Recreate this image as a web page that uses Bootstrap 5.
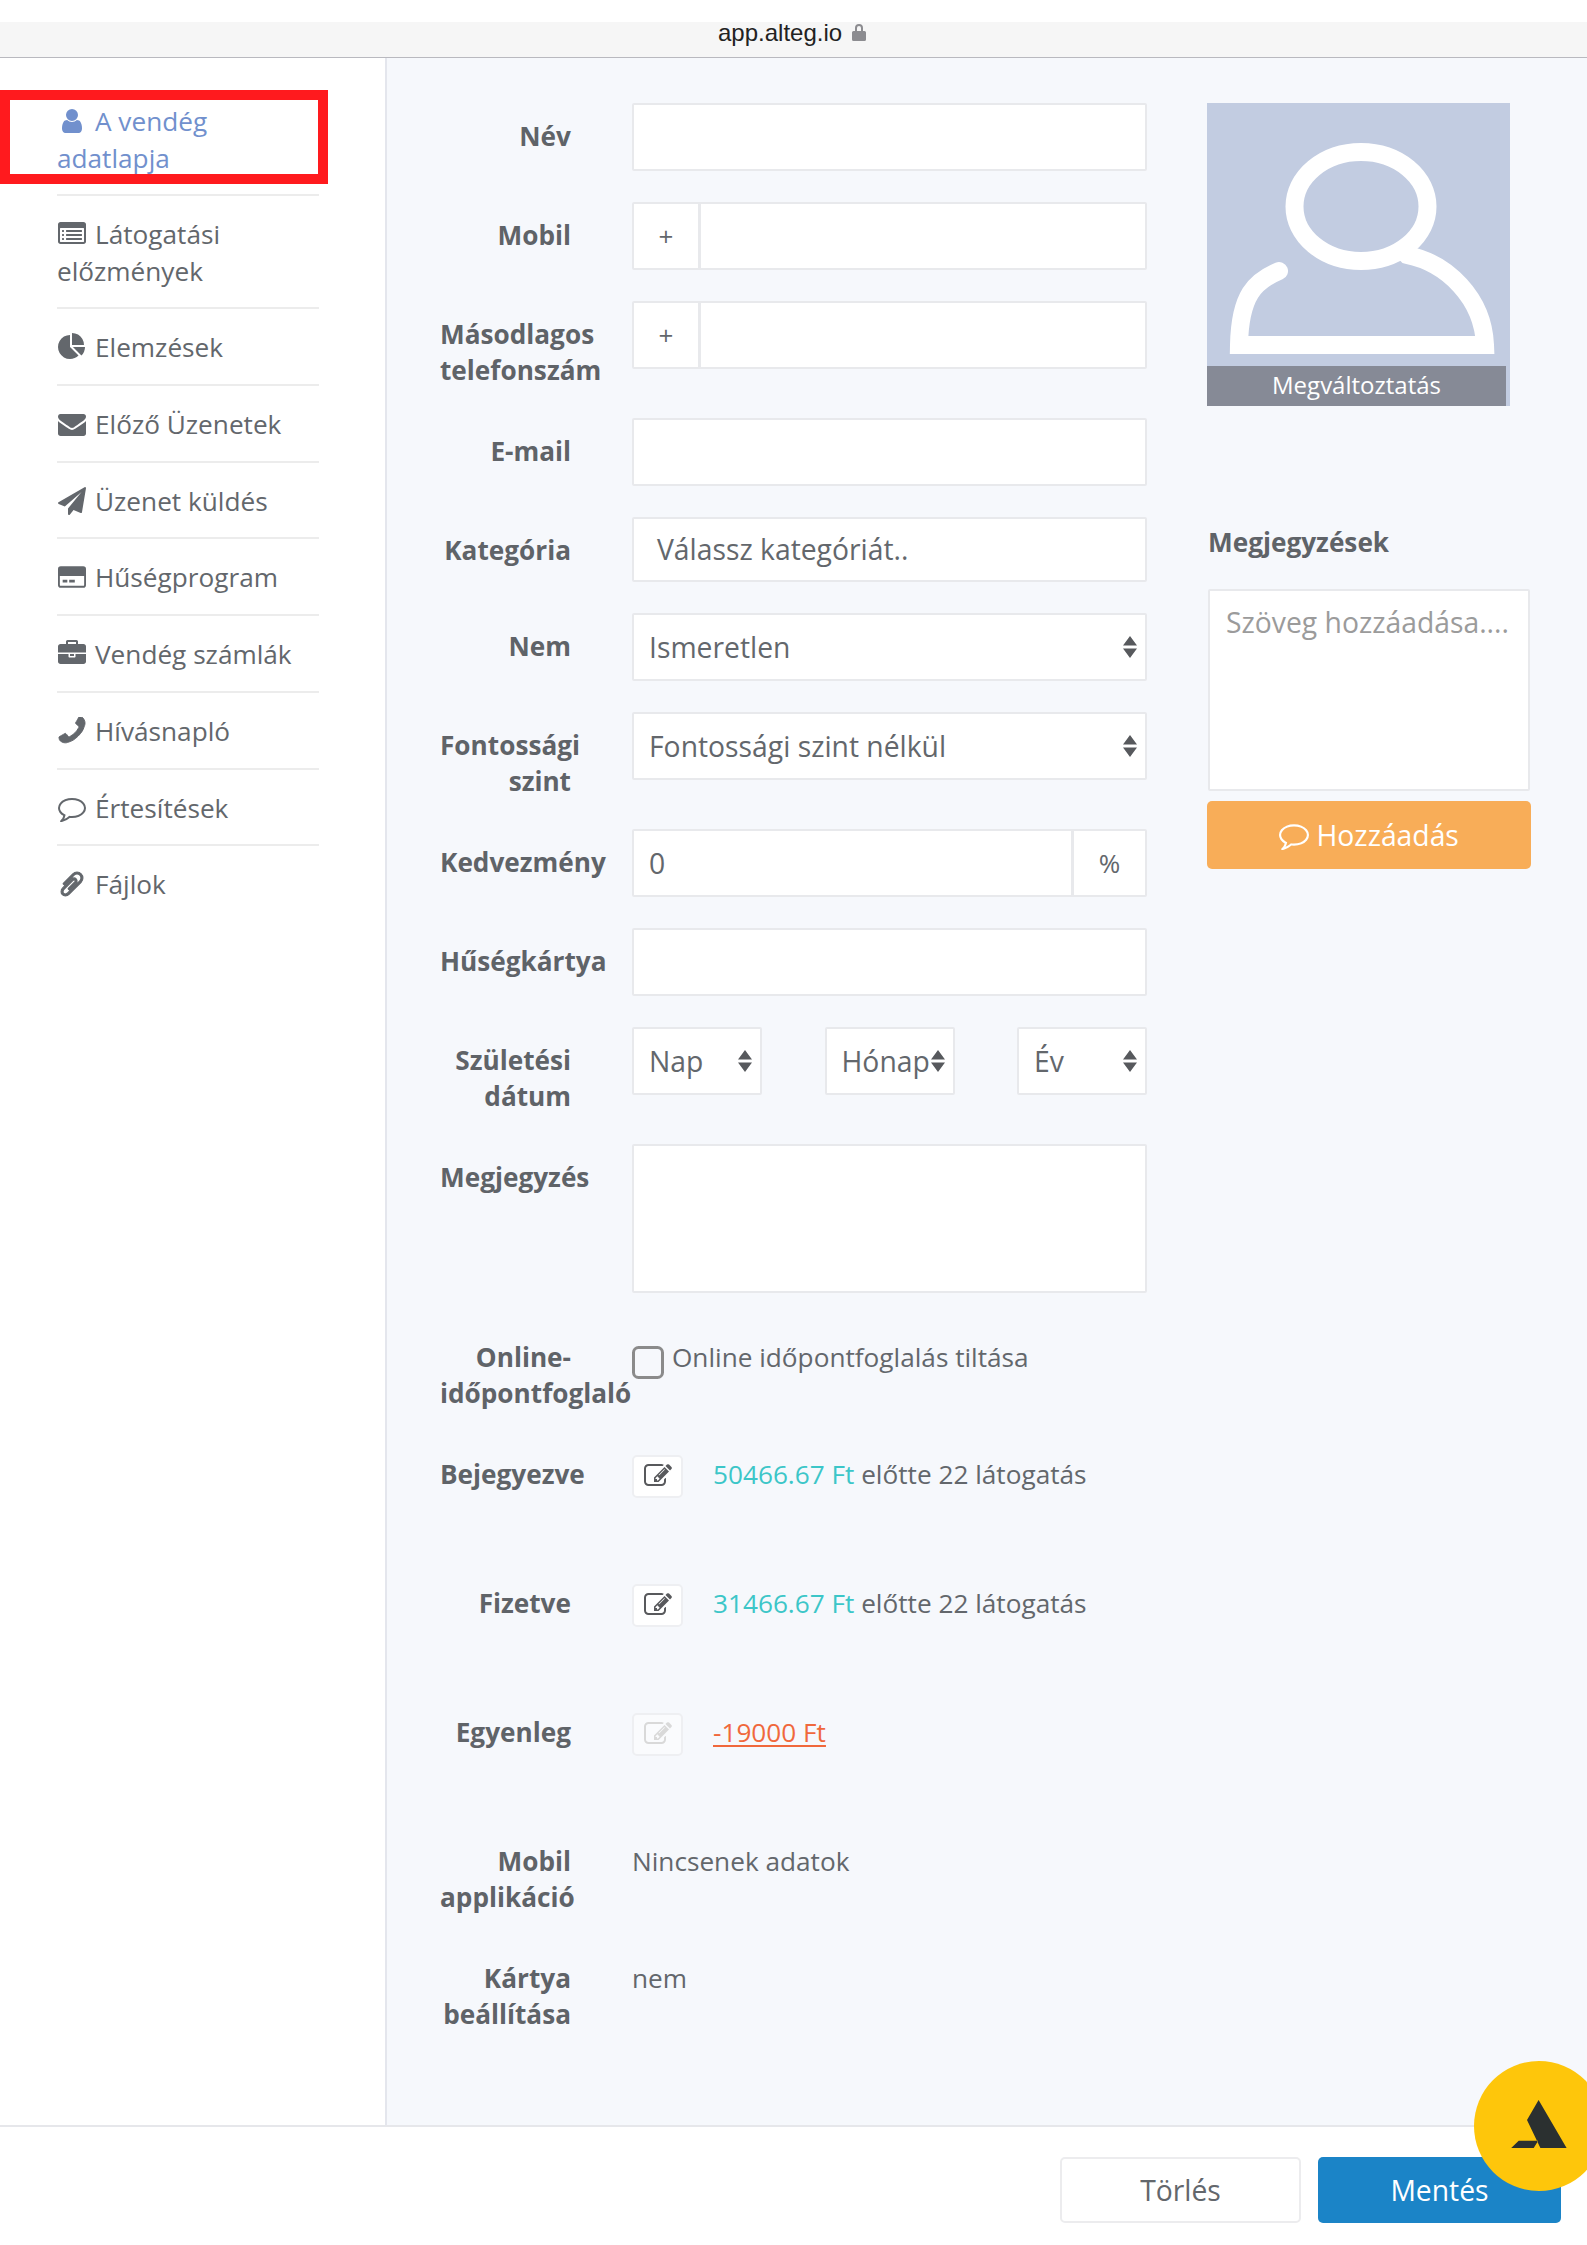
<!DOCTYPE html>
<html lang="hu">
<head>
<meta charset="utf-8">
<title>A vendég adatlapja</title>
<link href="https://cdn.jsdelivr.net/npm/bootstrap@5.3.0/dist/css/bootstrap.min.css" rel="stylesheet">
<style>
html,body{margin:0;width:1587px;height:2245px;overflow:hidden;background:#fff}
body{font-family:"Open Sans","Noto Sans",sans-serif;font-size:26.2px;line-height:36.5px;color:#63676c}
.page-wrap{width:1587px;height:2245px;position:relative;overflow:hidden}
.top-gap{height:22px;background:#fff}
.url-bar{height:36px;background:#f6f6f6;border-bottom:1px solid #b9b9bf;color:#222;font-family:"Liberation Sans",sans-serif;font-size:24px;line-height:24px;padding:0 0 14px 718px;gap:10px}
.url-bar svg{width:14px;height:18px;fill:#8c8c90;margin-top:-2px}
.body-area{height:2067px}
.side{width:387px;flex:none;background:#fff;border-right:2px solid #e4e6ed;padding:25px 66px 0 57px;position:relative}
.side-item{display:block;padding:20px 0 18.2px;border-bottom:2px solid #ececec;color:#63676c;text-decoration:none}
.side-item:last-child{border-bottom:0}
.side-item.active-item{color:#7190cd}
.ic{width:28px;height:28px;fill:currentColor;vertical-align:-4px;margin-right:9px;margin-left:1px}
.red-mark{position:absolute;left:0;top:32px;width:328px;height:94px;border:10px solid #ff1a1e;pointer-events:none}
.main-area{background:#f6f8fc;padding:45px 0 0 53px;flex:1;min-width:0}
.form-col{width:707px;flex:none}
.frow{display:flex;align-items:flex-start;margin-bottom:31px}
.lbl{width:131px;flex:none;margin:0 61px -1px 0;padding-top:15px;line-height:36px;text-align:right;font-weight:700;color:#5f6368}
.fld{width:515px;flex:none}
.form-control.ctl,.form-select.ctl,.input-group-text.ctl{height:68px;font-size:28.3px;color:#63676c;border:2px solid #e8e9ec;border-radius:2px;background-color:#fff}
.form-select.ctl{height:68px;padding:0 10px 0 15px;background-image:url("data:image/svg+xml,%3Csvg xmlns='http://www.w3.org/2000/svg' viewBox='0 0 14 22'%3E%3Cpath fill='%2357595d' d='M7 0l7 9.500H0zM7 22L0 12.500h14z'/%3E%3C/svg%3E");background-size:14px 22px;background-position:right 8px center}
.cat-box{height:65px!important;display:flex;align-items:center;padding-left:23px}
.input-group-text.ctl{justify-content:center;padding:0;font-size:26px}
.plus-add{width:68px}
.pct-add{width:75px}
.val-in{padding-left:15px}
.date-sel{width:130px!important;flex:none}
.note-area{height:148.5px;resize:none;border:2px solid #e8e9ec;border-radius:2px}
.opt-check{width:32px;height:33px;margin:22px 8px 0 0;border:3px solid #8b8b8b;border-radius:9px;background-color:transparent;flex:none;float:none}
.opt-text{padding-top:15px}
.edit-btn{width:51px;height:43px;margin:14px 30px 0 0;padding:0;background:#fff;border:2px solid #eeeff2;border-radius:5px;flex:none;color:#58595c;line-height:1;display:flex;align-items:center;justify-content:center}
.edit-btn svg{width:28px;height:28px;fill:currentColor;stroke:currentColor;stroke-width:.4px}
.edit-btn.off{color:#d9d9d9;background:#fafbfd;opacity:1}
.stat-line{padding-top:15px}
.teal{color:#3cc6c8}
.red-link{color:#f0683c;text-decoration:underline;text-underline-offset:3px}
.plain-val{padding-top:15px}
.stat-row{height:98px}
.right-col{width:324px;margin-left:60px;flex:none}
.ava{width:303px;height:303px;background:#c2cce1;position:relative;display:block}
.ava svg{width:303px;height:303px;display:block}
.ava-cap{position:absolute;left:0;bottom:0;width:299px;height:40px;background:#868a96;color:#fff;font-size:24px;line-height:38px;text-align:center}
.note-head{font-weight:700;color:#5f6368;margin:118px 0 29px 1px;line-height:36px}
.note-input{display:block;width:322px;height:202px;margin-left:1px;padding:13px 16px 6px;border:2px solid #e8e9ec;border-radius:2px;background:#fff;font-size:28.3px;line-height:36px;resize:none}
.note-input::placeholder{color:#9b9b9b}
.add-btn{width:324px;height:68px;margin-top:10px;background:#f8ad58;border:0;border-radius:5px;color:#fff;font-size:28.3px;padding:0}
.add-btn svg{width:30px;height:30px;fill:#fff;vertical-align:-4px}
.foot{height:120px;background:#fff;border-top:2px solid #e6e7eb;padding:30px 26px 0 0;gap:17px;align-items:flex-start}
.foot-btn{width:241px;height:66px;font-size:28.3px;line-height:1;border-radius:5px;padding:0}
.btn-del{background:#fff;border:2px solid #ececee;color:#63676c}
.btn-save{width:243px;background:#1b84c7;border:0;color:#fff}
.bubble{position:absolute;left:1474px;top:2061px;width:130px;height:130px;border-radius:50%;background:#fec60b}
.bubble svg{width:130px;height:130px;display:block}
</style>
</head>
<body>
<svg width="0" height="0" class="d-none">
<defs>
<symbol id="i-user" viewBox="0 0 1792 1792"><path d="M1536 1399q0 109-62.5 187t-150.5 78h-854q-88 0-150.5-78t-62.5-187q0-85 8.5-160.5t31.5-152 58.5-131 94-89 134.5-34.5q131 128 313 128t313-128q76 0 134.5 34.5t94 89 58.5 131 31.5 152 8.5 160.5zm-256-887q0 159-112.5 271.5t-271.5 112.5-271.5-112.5-112.5-271.5 112.5-271.5 271.5-112.5 271.5 112.5 112.5 271.5z"/></symbol>
<symbol id="i-list" viewBox="0 0 1792 1792"><path d="M384 1184v64q0 13-9.5 22.5t-22.5 9.5h-64q-13 0-22.5-9.5t-9.5-22.5v-64q0-13 9.5-22.5t22.5-9.5h64q13 0 22.5 9.5t9.5 22.5zm0-256v64q0 13-9.5 22.5t-22.5 9.5h-64q-13 0-22.5-9.5t-9.5-22.5v-64q0-13 9.5-22.5t22.5-9.5h64q13 0 22.5 9.5t9.5 22.5zm0-256v64q0 13-9.5 22.5t-22.5 9.5h-64q-13 0-22.5-9.5t-9.5-22.5v-64q0-13 9.5-22.5t22.5-9.5h64q13 0 22.5 9.5t9.5 22.5zm1152 512v64q0 13-9.5 22.5t-22.5 9.5h-960q-13 0-22.5-9.5t-9.5-22.5v-64q0-13 9.5-22.5t22.5-9.5h960q13 0 22.5 9.5t9.5 22.5zm0-256v64q0 13-9.5 22.5t-22.5 9.5h-960q-13 0-22.5-9.5t-9.5-22.5v-64q0-13 9.5-22.5t22.5-9.5h960q13 0 22.5 9.5t9.5 22.5zm0-256v64q0 13-9.5 22.5t-22.5 9.5h-960q-13 0-22.5-9.5t-9.5-22.5v-64q0-13 9.5-22.5t22.5-9.5h960q13 0 22.5 9.5t9.5 22.5zm128 704v-832q0-13-9.5-22.5t-22.5-9.5h-1472q-13 0-22.5 9.5t-9.5 22.5v832q0 13 9.5 22.5t22.5 9.5h1472q13 0 22.5-9.5t9.5-22.5zm128-1088v1088q0 66-47 113t-113 47h-1472q-66 0-113-47t-47-113v-1088q0-66 47-113t113-47h1472q66 0 113 47t47 113z"/></symbol>
<symbol id="i-pie" viewBox="0 0 1792 1792"><path d="M768 890l546 546q-106 108-247.5 168t-298.5 60q-209 0-385.5-103t-279.5-279.5-103-385.5 103-385.5 279.5-279.5 385.5-103v762zm187 6h773q0 157-60 298.5t-168 247.5zm709-128h-768v-768q209 0 385.5 103t279.5 279.5 103 385.5z"/></symbol>
<symbol id="i-mail" viewBox="0 0 1792 1792"><path d="M1792 710v794q0 66-47 113t-113 47h-1472q-66 0-113-47t-47-113v-794q44 49 101 87 362 246 497 345 57 42 92.5 65.5t94.5 48 110 24.5h2q51 0 110-24.5t94.5-48 92.5-65.5q170-123 498-345 57-39 100-87zm0-294q0 79-49 151t-122 123q-376 261-468 325-10 7-42.5 30.5t-54 38-52 32.5-57.5 27-50 9h-2q-23 0-50-9t-57.5-27-52-32.5-54-38-42.5-30.5q-91-64-262-182.5t-205-142.5q-62-42-117-115.5t-55-136.5q0-78 41.5-130t118.5-52h1472q65 0 112.5 47t47.5 113z"/></symbol>
<symbol id="i-plane" viewBox="0 0 1792 1792"><path d="M1764 11q33 24 27 64l-256 1536q-5 29-32 45-14 8-31 8-11 0-24-5l-453-185-242 295q-18 23-49 23-13 0-22-4-19-7-30.5-23.5t-11.5-36.5v-349l864-1059-1069 925-395-162q-37-14-40-55-2-40 32-59l1664-960q15-9 32-9 20 0 36 11z"/></symbol>
<symbol id="i-card" viewBox="0 0 30 24"><path fill-rule="evenodd" d="M3 .5h24A3 3 0 0 1 30 3.500v17a3 3 0 0 1-3 3H3a3 3 0 0 1-3-3v-17a3 3 0 0 1 3-3zM2 11v9.500a1 1 0 0 0 1 1h24a1 1 0 0 0 1-1V11zM5 15h5v3H5zM12 15h6v3h-6z"/></symbol>
<symbol id="i-case" viewBox="0 0 1792 1792"><path d="M640 256h512v-128h-512v128zm1152 640v480q0 66-47 113t-113 47h-1472q-66 0-113-47t-47-113v-480h672v160q0 26 19 45t45 19h320q26 0 45-19t19-45v-160h672zm-768 0v128h-256v-128h256zm768-480v384h-1792v-384q0-66 47-113t113-47h352v-160q0-40 28-68t68-28h576q40 0 68 28t28 68v160h352q66 0 113 47t47 113z"/></symbol>
<symbol id="i-phone" viewBox="140 140 1512 1512"><path transform="translate(1792 0) scale(-1 1)" stroke="currentColor" stroke-width="50" d="M1600 1240q0 27-10 70.5t-21 68.5q-21 50-122 106-94 51-186 51-27 0-53-3.5t-57.5-12.5-47-14.5-55.5-20.5-49-18q-98-35-175-83-127-79-264-216t-216-264q-48-77-83-175-3-9-18-49t-20.5-55.5-14.5-47-12.5-57.5-3.5-53q0-92 51-186 56-101 106-122 25-11 68.5-21t70.5-10q14 0 21 3 18 6 53 76 11 19 30 54t35 63.5 31 53.5q3 4 17.5 25t21.5 35.5 7 28.5q0 20-28.5 50t-62 55-62 53-28.5 46q0 9 5 22.5t8.5 20.5 14 24 11.5 19q76 137 174 235t235 174q2 1 19 11.5t24 14 20.5 8.5 22.5 5q18 0 46-28.5t53-62 55-62 50-28.5q14 0 28.5 7t35.5 21.5 25 17.5q25 15 53.5 31t63.5 35 54 30q70 35 76 53 3 7 3 21z"/></symbol>
<symbol id="i-bubble" viewBox="0 0 1792 1792"><path d="M896 384q-204 0-381.5 69.5t-282 187.5-104.5 255q0 112 71.5 213.5t201.5 175.5l87 50-27 96q-24 91-70 172 152-63 275-171l43-38 57 6q69 8 130 8 204 0 381.5-69.5t282-187.5 104.5-255-104.5-255-282-187.5-381.5-69.5zm896 512q0 174-120 321.5t-326 233-450 85.5q-70 0-145-8-198 175-460 242-49 14-114 22h-5q-15 0-27-10.5t-16-27.5v-1q-3-4-.5-12t2-10 4.5-9.5l6-9 7-8.5 8-9q7-8 31-34.5t34.5-38 31-39.5 32.5-51 27-59 26-76q-157-89-247.5-220t-90.5-281q0-174 120-321.5t326-233 450-85.5 450 85.5 326 233 120 321.5z"/></symbol>
<symbol id="i-clip" viewBox="0 0 1792 1792"><path transform="translate(1792 0) scale(-1 1)" stroke="currentColor" stroke-width="70" d="M1596 1385q0 117-79 196t-196 79q-135 0-235-100l-777-776q-113-115-113-271 0-159 110-270t269-111q158 0 273 113l605 606q10 10 10 22 0 16-30.5 46.5t-46.5 30.5q-13 0-23-10l-606-607q-79-77-181-77-106 0-179 75t-73 181q0 105 76 181l776 777q63 63 145 63 64 0 106-42t42-106q0-82-63-145l-581-581q-26-24-60-24-29 0-48 19t-19 48q0 32 25 59l410 410q10 10 10 22 0 16-31 47t-47 31q-12 0-22-10l-410-410q-63-61-63-149 0-82 57-139t139-57q88 0 149 63l581 581q100 98 100 235z"/></symbol>
<symbol id="i-edit" viewBox="0 0 1792 1792"><path d="M888 1184l116-116-152-152-116 116v56h96v96h56zm440-720q-16-16-33 1l-350 350q-17 17-1 33t33-1l350-350q17-17 1-33zm80 594v190q0 119-84.5 203.5t-203.5 84.5h-832q-119 0-203.5-84.5t-84.5-203.5v-832q0-119 84.5-203.5t203.5-84.5h832q63 0 117 25 15 7 18 23 3 17-9 29l-49 49q-14 14-32 8-23-6-45-6h-832q-66 0-113 47t-47 113v832q0 66 47 113t113 47h832q66 0 113-47t47-113v-126q0-13 9-22l64-64q15-15 35-7t20 29zm-96-738l288 288-672 672h-288v-288zm444 132l-92 92-288-288 92-92q28-28 68-28t68 28l152 152q28 28 28 68t-28 68z"/></symbol>
</defs>
</svg>
<div class="page-wrap">
  <div class="top-gap"></div>
  <div class="url-bar d-flex align-items-center">
    <span>app.alteg.io</span>
    <svg viewBox="0 0 14 18"><path d="M3 8V5a4 4 0 0 1 8 0v3h1.500A1.500 1.500 0 0 1 14 9.500V16.500A1.500 1.500 0 0 1 12.500 18h-11A1.500 1.500 0 0 1 0 16.500V9.500A1.500 1.500 0 0 1 1.500 8zM5 8h4V5a2 2 0 0 0-4 0z"/></svg>
  </div>
  <div class="body-area d-flex">
    <nav class="side">
      <div class="red-mark"></div>
      <a class="side-item active-item" href="#"><svg class="ic"><use href="#i-user"/></svg>A vendég adatlapja</a>
      <a class="side-item" href="#"><svg class="ic"><use href="#i-list"/></svg>Látogatási előzmények</a>
      <a class="side-item" href="#"><svg class="ic"><use href="#i-pie"/></svg>Elemzések</a>
      <a class="side-item" href="#"><svg class="ic"><use href="#i-mail"/></svg>Előző Üzenetek</a>
      <a class="side-item" href="#"><svg class="ic"><use href="#i-plane"/></svg>Üzenet küldés</a>
      <a class="side-item" href="#"><svg class="ic"><use href="#i-card"/></svg>Hűségprogram</a>
      <a class="side-item" href="#"><svg class="ic"><use href="#i-case"/></svg>Vendég számlák</a>
      <a class="side-item" href="#"><svg class="ic"><use href="#i-phone"/></svg>Hívásnapló</a>
      <a class="side-item" href="#"><svg class="ic"><use href="#i-bubble"/></svg>Értesítések</a>
      <a class="side-item" href="#"><svg class="ic"><use href="#i-clip"/></svg>Fájlok</a>
    </nav>
    <main class="main-area d-flex align-items-start">
      <form class="form-col">
        <div class="frow"><div class="lbl">Név</div><div class="fld"><input class="form-control ctl" type="text"></div></div>
        <div class="frow"><div class="lbl">Mobil</div><div class="fld input-group"><span class="input-group-text ctl plus-add">+</span><input class="form-control ctl" type="text"></div></div>
        <div class="frow"><div class="lbl">Másodlagos telefonszám</div><div class="fld input-group"><span class="input-group-text ctl plus-add">+</span><input class="form-control ctl" type="text"></div></div>
        <div class="frow"><div class="lbl">E-mail</div><div class="fld"><input class="form-control ctl" type="text"></div></div>
        <div class="frow"><div class="lbl">Kategória</div><div class="fld"><div class="form-control ctl cat-box">Válassz kategóriát..</div></div></div>
        <div class="frow"><div class="lbl">Nem</div><div class="fld"><select class="form-select ctl"><option>Ismeretlen</option></select></div></div>
        <div class="frow"><div class="lbl">Fontossági szint</div><div class="fld"><select class="form-select ctl"><option>Fontossági szint nélkül</option></select></div></div>
        <div class="frow"><div class="lbl">Kedvezmény</div><div class="fld input-group"><input class="form-control ctl val-in" type="text" value="0"><span class="input-group-text ctl pct-add">%</span></div></div>
        <div class="frow"><div class="lbl">Hűségkártya</div><div class="fld"><input class="form-control ctl" type="text"></div></div>
        <div class="frow"><div class="lbl">Születési dátum</div><div class="fld d-flex justify-content-between">
          <select class="form-select ctl date-sel"><option>Nap</option></select>
          <select class="form-select ctl date-sel"><option>Hónap</option></select>
          <select class="form-select ctl date-sel"><option>Év</option></select>
        </div></div>
        <div class="frow"><div class="lbl">Megjegyzés</div><div class="fld"><textarea class="form-control note-area"></textarea></div></div>
        <div class="frow"><div class="lbl">Online-időpontfoglaló</div><div class="fld d-flex"><input class="form-check-input opt-check" type="checkbox"><span class="opt-text">Online időpontfoglalás tiltása</span></div></div>
        <div class="frow stat-row"><div class="lbl">Bejegyezve</div><div class="fld d-flex"><button type="button" class="btn edit-btn"><svg><use href="#i-edit"/></svg></button><span class="stat-line"><span class="teal">50466.67 Ft</span> előtte 22 látogatás</span></div></div>
        <div class="frow stat-row"><div class="lbl">Fizetve</div><div class="fld d-flex"><button type="button" class="btn edit-btn"><svg><use href="#i-edit"/></svg></button><span class="stat-line"><span class="teal">31466.67 Ft</span> előtte 22 látogatás</span></div></div>
        <div class="frow stat-row"><div class="lbl">Egyenleg</div><div class="fld d-flex"><button type="button" class="btn edit-btn off"><svg><use href="#i-edit"/></svg></button><span class="stat-line"><a class="red-link" href="#">-19000 Ft</a></span></div></div>
        <div class="frow"><div class="lbl">Mobil applikáció</div><div class="fld plain-val">Nincsenek adatok</div></div>
        <div class="frow"><div class="lbl">Kártya beállítása</div><div class="fld plain-val">nem</div></div>
      </form>
      <aside class="right-col">
        <div class="ava">
          <svg viewBox="0 0 303 303"><g fill="none" stroke="#fff" stroke-width="18" stroke-linecap="round"><ellipse cx="154" cy="103.500" rx="66.500" ry="54.500"/><path d="M72 168C48 178 33 192 32 242H278C276 195 240 160 200 152"/></g></svg>
          <div class="ava-cap">Megváltoztatás</div>
        </div>
        <div class="note-head">Megjegyzések</div>
        <textarea class="note-input" placeholder="Szöveg hozzáadása...."></textarea>
        <button type="button" class="btn add-btn"><svg><use href="#i-bubble"/></svg> Hozzáadás</button>
      </aside>
    </main>
  </div>
  <footer class="foot d-flex justify-content-end">
    <button type="button" class="btn foot-btn btn-del">Törlés</button>
    <button type="button" class="btn foot-btn btn-save">Mentés</button>
  </footer>
  <div class="bubble"><svg viewBox="0 0 130 130"><path fill="#2b3030" d="M64.600 39L53 59L66.400 87H92.600zM44.700 79.700H64.200L59.700 87H37.200z"/></svg></div>
</div>
<script src="https://cdn.jsdelivr.net/npm/bootstrap@5.3.0/dist/js/bootstrap.bundle.min.js"></script>
</body>
</html>
